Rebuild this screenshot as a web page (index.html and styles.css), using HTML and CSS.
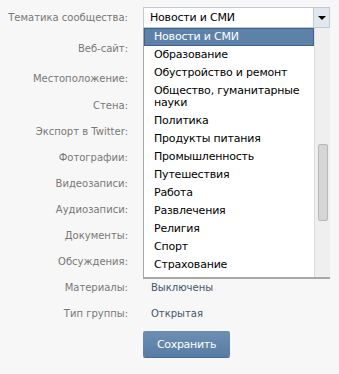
FILE: index.html
```html
<!DOCTYPE html>
<html>
  <head>
    <meta charset="utf-8">
    <title>Настройки сообщества</title>
    <link rel="stylesheet" href="styles.css">
  </head>
  <body>
    <div id="settings">
      <div class="row first">
        <label>Тематика сообщества:</label>
        <div class="select">
          <span class="selectText">Новости и СМИ</span>
          <span class="selectArrow"></span>
        </div>
      </div>
      <div class="row tall">
        <label>Веб-сайт:</label>
      </div>
      <div class="row tall">
        <label>Местоположение:</label>
      </div>
      <div class="row">
        <label>Стена:</label>
      </div>
      <div class="row">
        <label>Экспорт в Twitter:</label>
      </div>
      <div class="row">
        <label>Фотографии:</label>
      </div>
      <div class="row">
        <label>Видеозаписи:</label>
      </div>
      <div class="row">
        <label>Аудиозаписи:</label>
      </div>
      <div class="row">
        <label>Документы:</label>
      </div>
      <div class="row">
        <label>Обсуждения:</label>
      </div>
      <div class="row">
        <label>Материалы:</label>
        <span class="value">Выключены</span>
      </div>
      <div class="row">
        <label>Тип группы:</label>
        <span class="value">Открытая</span>
      </div>
      <div class="row">
        <button class="saveBtn">Сохранить</button>
      </div>

      <div id="dropdown">
        <ul class="options">
          <li class="selected">Новости и СМИ</li>
          <li>Образование</li>
          <li>Обустройство и ремонт</li>
          <li>Общество, гуманитарные науки</li>
          <li>Политика</li>
          <li>Продукты питания</li>
          <li>Промышленность</li>
          <li>Путешествия</li>
          <li>Работа</li>
          <li>Развлечения</li>
          <li>Религия</li>
          <li>Спорт</li>
          <li>Страхование</li>
        </ul>
        <div class="scrollbar">
          <div class="thumb"></div>
        </div>
      </div>
    </div>
  </body>
</html>
```

FILE: styles.css
```css
body {
  margin: 0;
  background: #f7f7f7;
  font-family: "DejaVu Sans", Tahoma, sans-serif;
  font-size: 10px;
  color: #333;
}

#settings {
  position: relative;
  padding-top: 7px;
  display: flex;
  flex-direction: column;
}

.row {
  display: flex;
  align-items: center;
  min-height: 16px;
  margin-bottom: 10px;
}

.row.first {
  min-height: 21px;
  margin-bottom: 9px;
}

.row.tall {
  min-height: 22px;
  margin-bottom: 8px;
}

label {
  width: 128px;
  flex-shrink: 0;
  text-align: right;
  white-space: nowrap;
  color: #777;
  margin-right: 15px;
}

.value {
  margin-left: 8px;
  color: #45566b;
}

.select {
  box-sizing: border-box;
  width: 187px;
  height: 21px;
  border: 1px solid #c0cad5;
  background: #fff;
  display: flex;
  align-items: center;
  font-size: 11px;
  letter-spacing: -0.2px;
}

.selectText {
  flex: 1;
  padding-left: 6px;
  color: #000;
}

.selectArrow {
  width: 15px;
  height: 19px;
  background: #e1e7ed;
  border-left: 1px solid #c0cad5;
  position: relative;
}

.selectArrow::after {
  content: "";
  position: absolute;
  left: 4px;
  top: 8px;
  border-left: 4px solid transparent;
  border-right: 4px solid transparent;
  border-top: 4px solid #000;
}

.saveBtn {
  margin-left: 143px;
  width: 87px;
  height: 26px;
  border: none;
  border-radius: 2px;
  background: linear-gradient(#6d8fb3, #577ca4);
  color: #fff;
  font-family: inherit;
  font-size: 11px;
  letter-spacing: -0.3px;
  box-shadow: 0 1px 0 #4a6d94;
}

#dropdown {
  position: absolute;
  left: 143px;
  top: 28px;
  width: 187px;
  height: 251px;
  box-sizing: border-box;
  display: flex;
  background: #fff;
  border-left: 1px solid #a8a8a8;
  border-bottom: 2px solid #a8a8a8;
  overflow: hidden;
  font-size: 11px;
  letter-spacing: -0.2px;
}

.options {
  list-style: none;
  margin: 0;
  padding: 0;
  flex: 1;
  color: #000;
}

.options li {
  padding: 3px 10px;
  line-height: 12px;
}

.options li.selected {
  background: #5e81a8;
  color: #fff;
  outline: 1px solid #3e6390;
  outline-offset: -1px;
}

.scrollbar {
  width: 15px;
  flex-shrink: 0;
  background: #efefef;
  border-left: 1px solid #dcdcdc;
  position: relative;
}

.thumb {
  position: absolute;
  left: 3px;
  top: 116px;
  width: 8px;
  height: 75px;
  background: #d6d6d6;
  border: 1px solid #b8b8b8;
  border-radius: 2px;
}
```
